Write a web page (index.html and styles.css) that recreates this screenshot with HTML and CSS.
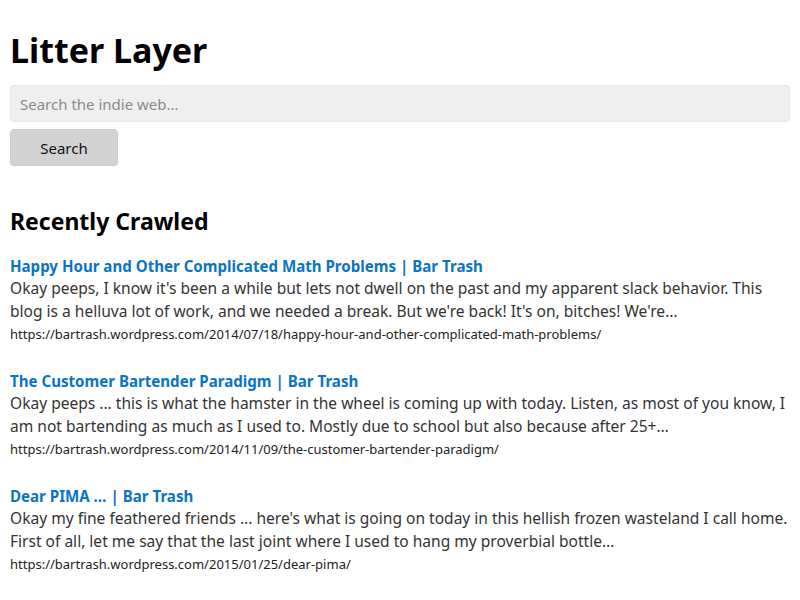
FILE: index.html
```html
<!DOCTYPE html>
<html>
<head>
<meta charset="utf-8">
<title>Litter Layer</title>
<link rel="stylesheet" href="styles.css">
</head>
<body>
<h1 class="site-title">Litter Layer</h1>
<form class="search-form">
  <input class="search-input" type="text" placeholder="Search the indie web...">
  <button class="search-button" type="button">Search</button>
</form>
<h2 class="section-title">Recently Crawled</h2>
<div class="results">
  <div class="result">
    <a class="result-title" href="#">Happy Hour and Other Complicated Math Problems | Bar Trash</a>
    <p class="result-snippet">Okay peeps, I know it's been a while but lets not dwell on the past and my apparent slack behavior. This blog is a helluva lot of work, and we needed a break. But we're back! It's on, bitches! We're…</p>
    <div class="result-url">https://bartrash.wordpress.com/2014/07/18/happy-hour-and-other-complicated-math-problems/</div>
  </div>
  <div class="result">
    <a class="result-title" href="#">The Customer Bartender Paradigm | Bar Trash</a>
    <p class="result-snippet">Okay peeps ... this is what the hamster in the wheel is coming up with today. Listen, as most of you know, I am not bartending as much as I used to. Mostly due to school but also because after 25+…</p>
    <div class="result-url">https://bartrash.wordpress.com/2014/11/09/the-customer-bartender-paradigm/</div>
  </div>
  <div class="result">
    <a class="result-title" href="#">Dear PIMA … | Bar Trash</a>
    <p class="result-snippet">Okay my fine feathered friends ... here's what is going on today in this hellish frozen wasteland I call home. First of all, let me say that the last joint where I used to hang my proverbial bottle…</p>
    <div class="result-url">https://bartrash.wordpress.com/2015/01/25/dear-pima/</div>
  </div>
</div>
</body>
</html>
```

FILE: styles.css
```css
html, body {
  margin: 0;
  padding: 0;
  background: #fff;
}
body {
  padding: 10px;
  font-family: "Noto Sans", "Open Sans", sans-serif;
  color: #000;
}
.site-title {
  font-size: 34px;
  font-weight: 700;
  line-height: 40px;
  margin: 20px 0 15px;
}
.search-form {
  display: flex;
  flex-direction: column;
  align-items: flex-start;
  gap: 7px;
}
.search-input {
  box-sizing: border-box;
  width: 100%;
  height: 37px;
  padding: 0 9px;
  border: 1px solid #e8e8e8;
  border-radius: 4px;
  background: #efefef;
  font-family: inherit;
  font-size: 15px;
  color: #333;
  outline: none;
}
.search-input::placeholder {
  color: #8a8a8a;
}
.search-button {
  width: 108px;
  height: 37px;
  border: 1px solid #cccccc;
  border-radius: 4px;
  background: #d3d3d3;
  font-family: inherit;
  font-size: 15px;
  color: #111;
  padding: 0;
}
.section-title {
  font-size: 23px;
  font-weight: 700;
  line-height: 30px;
  margin: 40px 0 19px;
}
.results {
  display: flex;
  flex-direction: column;
  gap: 24px;
}
.result {
  display: flex;
  flex-direction: column;
}
.result-title {
  color: #0a74c4;
  font-weight: 700;
  font-size: 15.1px;
  line-height: 22px;
  text-decoration: none;
}
.result-snippet {
  margin: 0;
  color: #333;
  font-size: 15.55px;
  line-height: 23px;
}
.result-url {
  font-size: 13px;
  line-height: 23px;
  color: #222;
}
```
